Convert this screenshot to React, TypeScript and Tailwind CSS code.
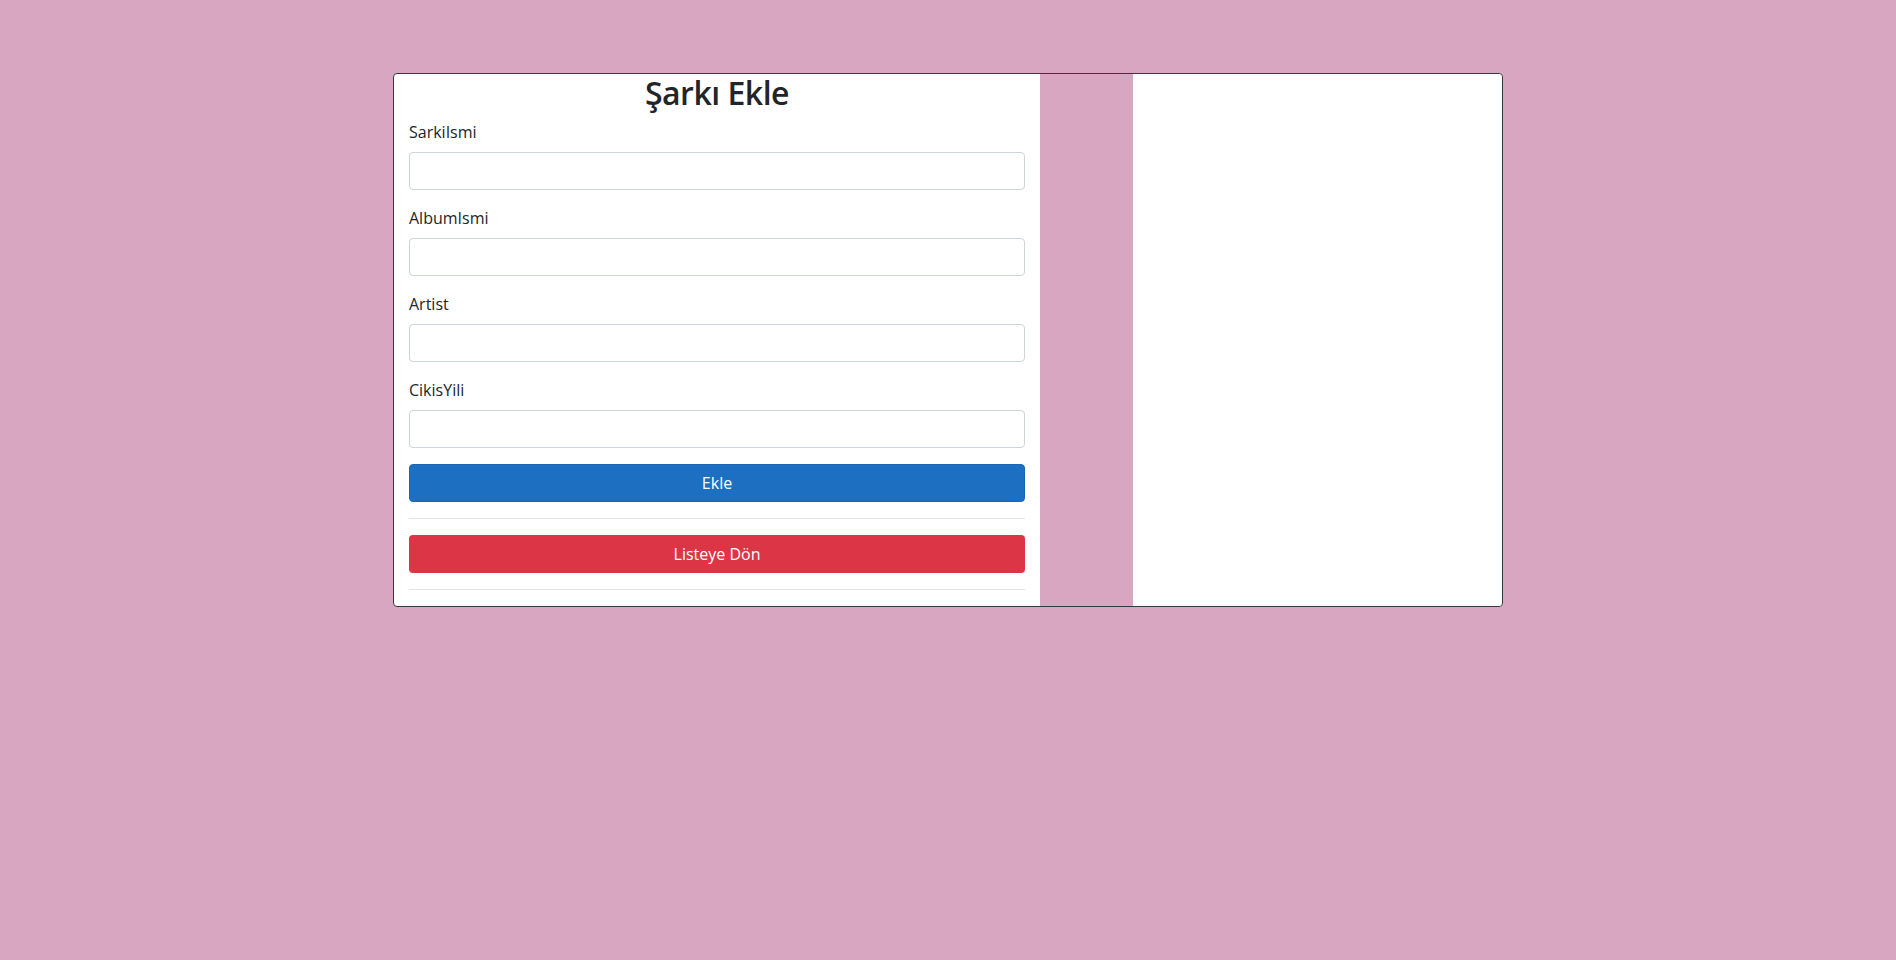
export default function App() {
  return (
    <main
      className="min-h-screen bg-[#d8a6c0] text-[#212529]"
      style={{ fontFamily: '"Open Sans", "Noto Sans", sans-serif' }}
    >
      <div className="mx-auto w-[1110px] pt-[73px]">
        {/* CARD */}
        <div className="flex rounded border border-[#343a40] bg-white">
          {/* FORM */}
          <div className="w-[646px] rounded-l px-[15px]">
            <h2 className="mb-2 text-center text-[32px] leading-[38px] font-semibold tracking-[-0.5px]">
              Şarkı Ekle
            </h2>

            <div className="mb-4">
              <label className="mb-2 block text-base leading-6">SarkiIsmi</label>
              <input className="block h-[38px] w-full rounded border border-[#ced4da] bg-white px-3" />
            </div>

            <div className="mb-4">
              <label className="mb-2 block text-base leading-6">AlbumIsmi</label>
              <input className="block h-[38px] w-full rounded border border-[#ced4da] bg-white px-3" />
            </div>

            <div className="mb-4">
              <label className="mb-2 block text-base leading-6">Artist</label>
              <input className="block h-[38px] w-full rounded border border-[#ced4da] bg-white px-3" />
            </div>

            <div className="mb-4">
              <label className="mb-2 block text-base leading-6">CikisYili</label>
              <input className="block h-[38px] w-full rounded border border-[#ced4da] bg-white px-3" />
            </div>

            <button className="block h-[38px] w-full rounded border border-[#1a66b3] bg-[#1d6fc1] text-base text-white">
              Ekle
            </button>

            <hr className="my-4 border-t border-[#e5e5e5]" />

            <button className="block h-[38px] w-full rounded bg-[#dc3545] text-base text-white">
              Listeye Dön
            </button>

            <hr className="mt-4 mb-4 border-t border-[#e5e5e5]" />
          </div>

          {/* SPACER */}
          <div className="w-[93px] bg-[#d8a6c0]"></div>

          {/* RIGHT */}
          <div className="flex-1 rounded-r bg-white"></div>
        </div>
      </div>
    </main>
  );
}
